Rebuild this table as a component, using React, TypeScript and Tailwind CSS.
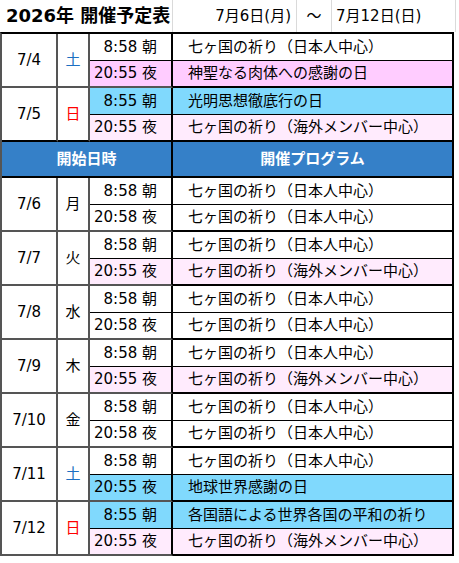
import React from "react";

type Row = { time: string; prog: string; bg: string };
type Group = { date: string; day: string; dayColor: string; rows: [Row, Row]; last?: boolean };

const W = "bg-white";
const PINK = "bg-[#ffccff]";
const LPINK = "bg-[#ffebfd]";
const BLUE = "bg-[#80d9fd]";

const JP = "七ヶ国の祈り（日本人中心）";
const OV = "七ヶ国の祈り（海外メンバー中心）";

const top: Group[] = [
  {
    date: "7/4",
    day: "土",
    dayColor: "text-[#1c6fc2]",
    rows: [
      { time: "8:58 朝", prog: JP, bg: W },
      { time: "20:55 夜", prog: "神聖なる肉体への感謝の日", bg: PINK },
    ],
  },
  {
    date: "7/5",
    day: "日",
    dayColor: "text-[#ff0000]",
    last: true,
    rows: [
      { time: "8:55 朝", prog: "光明思想徹底行の日", bg: BLUE },
      { time: "20:55 夜", prog: OV, bg: LPINK },
    ],
  },
];

const bottom: Group[] = [
  { date: "7/6", day: "月", dayColor: "text-black", rows: [{ time: "8:58 朝", prog: JP, bg: W }, { time: "20:58 夜", prog: JP, bg: W }] },
  { date: "7/7", day: "火", dayColor: "text-black", rows: [{ time: "8:58 朝", prog: JP, bg: W }, { time: "20:55 夜", prog: OV, bg: LPINK }] },
  { date: "7/8", day: "水", dayColor: "text-black", rows: [{ time: "8:58 朝", prog: JP, bg: W }, { time: "20:58 夜", prog: JP, bg: W }] },
  { date: "7/9", day: "木", dayColor: "text-black", rows: [{ time: "8:58 朝", prog: JP, bg: W }, { time: "20:55 夜", prog: OV, bg: LPINK }] },
  { date: "7/10", day: "金", dayColor: "text-black", rows: [{ time: "8:58 朝", prog: JP, bg: W }, { time: "20:58 夜", prog: JP, bg: W }] },
  { date: "7/11", day: "土", dayColor: "text-[#1c6fc2]", rows: [{ time: "8:58 朝", prog: JP, bg: W }, { time: "20:55 夜", prog: "地球世界感謝の日", bg: BLUE }] },
  { date: "7/12", day: "日", dayColor: "text-[#ff0000]", rows: [{ time: "8:55 朝", prog: "各国語による世界各国の平和の祈り", bg: BLUE }, { time: "20:55 夜", prog: OV, bg: LPINK }] },
];

function GroupRow({ g }: { g: Group }) {
  const leftB = g.last ? "border-b-black" : "border-b-[#555]";
  return (
    <div className="flex">
      <div className={`w-[56px] flex items-center justify-center border-r-2 border-r-[#555] border-b-2 ${leftB}`}>
        {g.date}
      </div>
      <div className={`w-[32px] flex items-center justify-center border-r-2 border-r-[#555] border-b-2 ${leftB} ${g.dayColor}`}>
        {g.day}
      </div>
      <div className="flex-1 flex flex-col">
        <div className={`flex h-[27px] border-b border-black ${g.rows[0].bg}`}>
          <div className="w-[83px] flex items-center justify-end pr-[14px] border-r-2 border-black whitespace-nowrap">
            {g.rows[0].time}
          </div>
          <div className="flex-1 flex items-center pl-[15px] whitespace-nowrap">{g.rows[0].prog}</div>
        </div>
        <div className={`flex h-[27px] ${g.rows[1].bg}`}>
          <div className={`w-[83px] flex items-center justify-end pr-[14px] border-r-2 border-r-black border-b-2 ${leftB} whitespace-nowrap`}>
            {g.rows[1].time}
          </div>
          <div className="flex-1 flex items-center pl-[15px] border-b-2 border-black whitespace-nowrap">{g.rows[1].prog}</div>
        </div>
      </div>
    </div>
  );
}

export default function App() {
  return (
    <div className="bg-white min-h-[563px] w-[459px] text-black text-[15px] leading-none font-['DejaVu_Sans','Noto_Sans_CJK_JP',sans-serif]">
      <div className="flex h-[32px] w-[456px]">
        <div className="w-[173px] flex items-center pl-[6px] border-r border-[#dadada] font-bold text-[18px] whitespace-nowrap">
          2026年 開催予定表
        </div>
        <div className="w-[124px] flex items-center justify-end pr-[5px] border-r border-[#dadada] whitespace-nowrap">
          7月6日(月)
        </div>
        <div className="w-[35px] flex items-center justify-center border-r border-[#dadada]">～</div>
        <div className="w-[124px] flex items-center pl-[4px] border-r border-[#dadada] whitespace-nowrap">
          7月12日(日)
        </div>
      </div>
      <div className="w-[454px] border-t-2 border-t-black border-l-2 border-l-[#555] border-r-2 border-r-black">
        {top.map((g) => (
          <GroupRow key={g.date} g={g} />
        ))}
        <div className="flex h-[36px] border-b-2 border-black bg-[#3580c8] text-white font-bold">
          <div className="w-[171px] flex items-center justify-center border-r-2 border-black">開始日時</div>
          <div className="flex-1 flex items-center justify-center">開催プログラム</div>
        </div>
        {bottom.map((g) => (
          <GroupRow key={g.date} g={g} />
        ))}
      </div>
    </div>
  );
}
